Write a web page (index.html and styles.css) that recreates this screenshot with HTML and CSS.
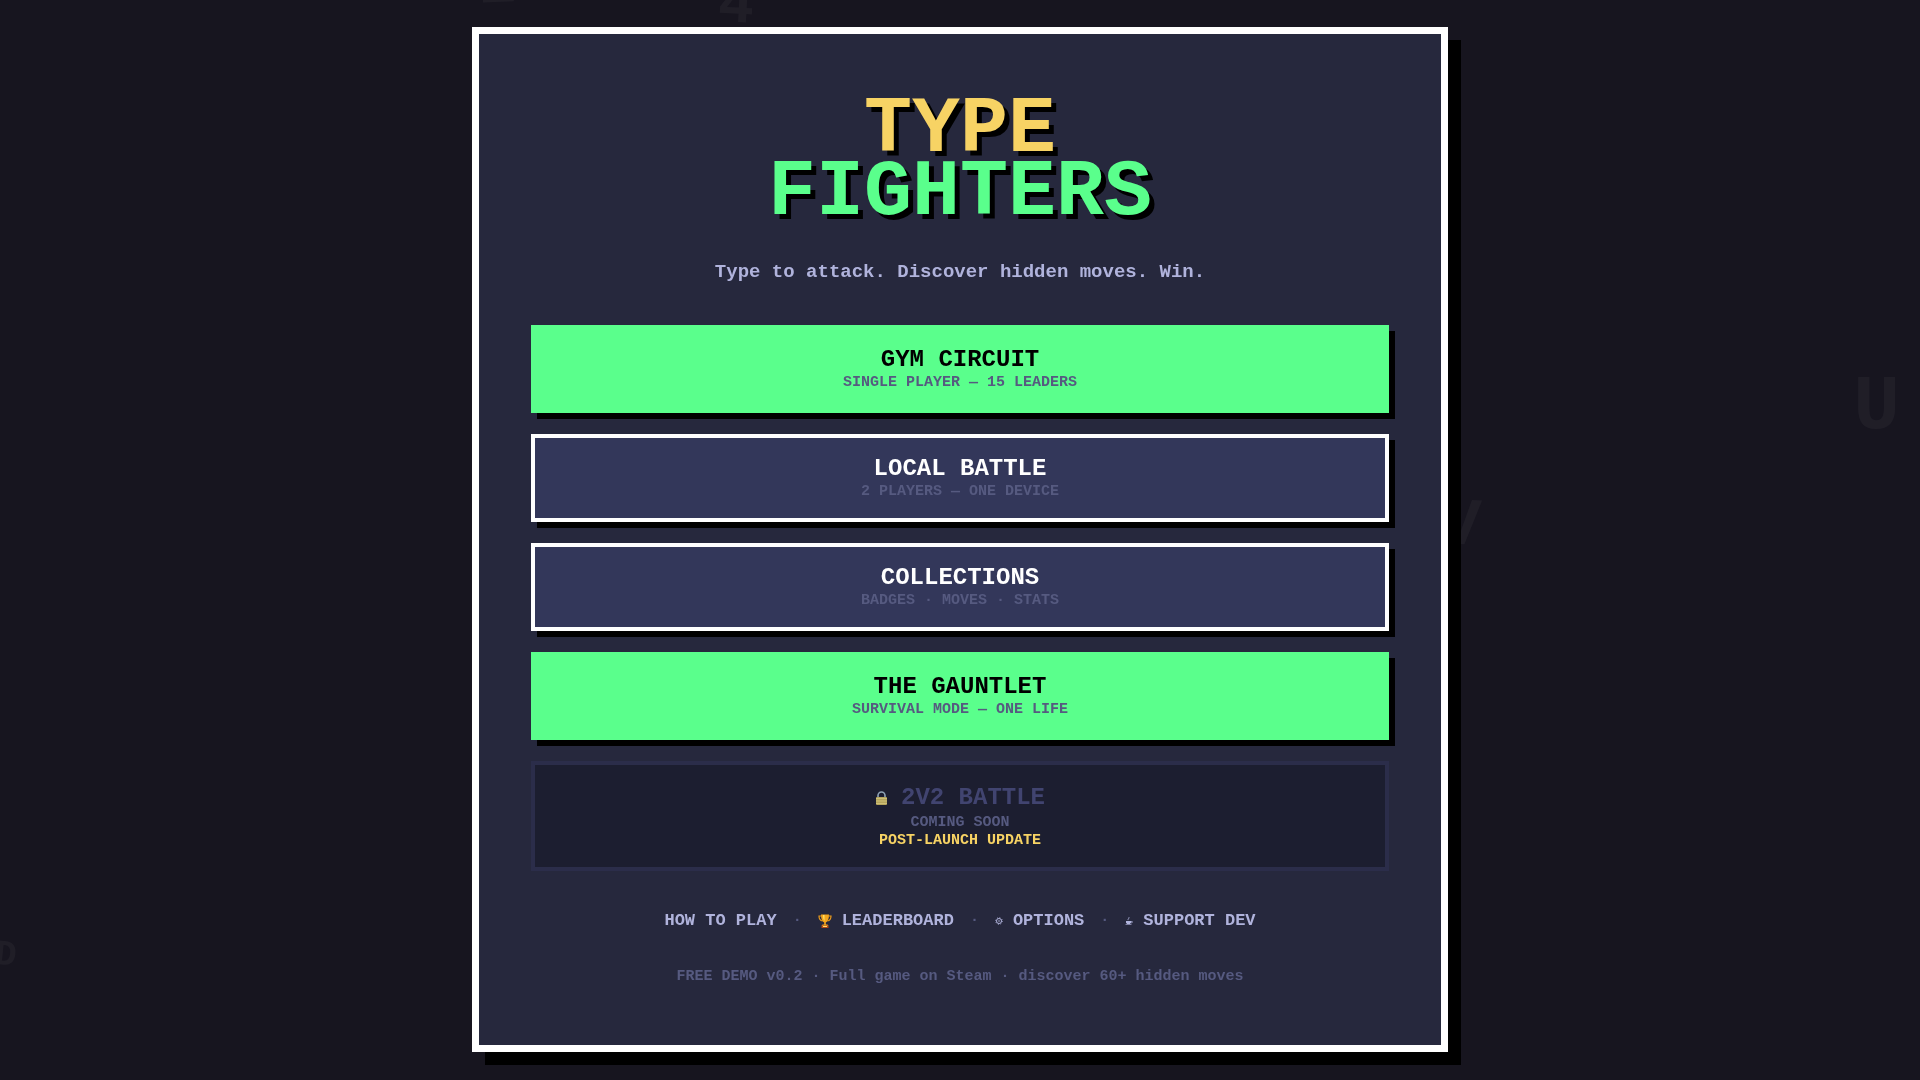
FILE: index.html
```html
<!DOCTYPE html>
<html lang="en">
<head>
  <meta charset="UTF-8">
  <meta name="viewport" content="width=device-width, initial-scale=1.0">
  <title>Type Fighters</title>
  <link rel="stylesheet" href="styles.css">
</head>
<body>
  <div class="bg-letters" aria-hidden="true">
    <span class="letter letter-z">Z</span>
    <span class="letter letter-4">4</span>
    <span class="letter letter-u">U</span>
    <span class="letter letter-v">V</span>
    <span class="letter letter-d">D</span>
  </div>

  <main class="panel">
    <h1 class="title"><span class="title-type">TYPE</span><span class="title-fighters">FIGHTERS</span></h1>
    <p class="tagline">Type to attack. Discover hidden moves. Win.</p>

    <div class="menu">
      <button class="menu-btn primary" type="button">
        <span class="btn-title">GYM CIRCUIT</span>
        <span class="btn-sub">SINGLE PLAYER — 15 LEADERS</span>
      </button>
      <button class="menu-btn" type="button">
        <span class="btn-title">LOCAL BATTLE</span>
        <span class="btn-sub">2 PLAYERS — ONE DEVICE</span>
      </button>
      <button class="menu-btn" type="button">
        <span class="btn-title">COLLECTIONS</span>
        <span class="btn-sub">BADGES · MOVES · STATS</span>
      </button>
      <button class="menu-btn primary" type="button">
        <span class="btn-title">THE GAUNTLET</span>
        <span class="btn-sub">SURVIVAL MODE — ONE LIFE</span>
      </button>
      <button class="menu-btn locked" type="button" disabled>
        <span class="btn-title">
          <svg class="lock" viewBox="0 0 13 14" aria-hidden="true">
            <path d="M3 7V4.500a3.500 3.500 0 0 1 7 0V7" fill="none" stroke="#8fa3b5" stroke-width="1.600"/>
            <rect x="1" y="6" width="11" height="8" rx="1" fill="#b5a45c"/>
            <path d="M1 7.500h11M1 10h11M1 12.500h11" stroke="#d3c67c" stroke-width=".8"/>
          </svg>
          2V2 BATTLE
        </span>
        <span class="btn-sub">COMING SOON</span>
        <span class="btn-note">POST-LAUNCH UPDATE</span>
      </button>
    </div>

    <nav class="links">
      <a href="#how">HOW TO PLAY</a>
      <span class="dot">·</span>
      <a href="#leaderboard">
        <svg class="trophy" viewBox="0 0 14 14" aria-hidden="true">
          <path d="M3.500 2H1c0 3 1 4.500 3.500 5M10.500 2H13c0 3-1 4.500-3.500 5" fill="none" stroke="#e99a1c" stroke-width="1.200"/>
          <path d="M3 .5h8c0 4.500-1 7-3.200 8v2h1.700l1 1.500h-7l1-1.500h1.700v-2C4 7.500 3 5 3 .5z" fill="#f3a61d"/>
          <path d="M5 1h1.500v6C5.500 6 5 4 5 1z" fill="#ffe16b"/>
          <path d="M3.500 11.500h7V14h-7z" fill="#b54a16"/>
          <path d="M5 12h4v1H5z" fill="#ffe16b"/>
        </svg>
        LEADERBOARD
      </a>
      <span class="dot">·</span>
      <a href="#options">
        <svg class="small-icon" viewBox="0 0 8 8" aria-hidden="true">
          <circle cx="4" cy="4" r="2.500" fill="none" stroke="currentColor"/>
          <circle cx="4" cy="4" r=".8" fill="currentColor"/>
          <circle cx="4" cy="4" r="3.300" fill="none" stroke="currentColor" stroke-width="1" stroke-dasharray="1 1.600"/>
        </svg>
        OPTIONS
      </a>
      <span class="dot">·</span>
      <a href="#support">
        <svg class="small-icon" viewBox="0 0 8 8" aria-hidden="true">
          <path d="M1 4h5v1.500L5 7H2L1 5.500z" fill="currentColor"/>
          <path d="M6 4.500h1.300v1L6 6M.5 7.600h6M3 3.200V2l1-.6V0" fill="none" stroke="currentColor" stroke-width=".7"/>
        </svg>
        SUPPORT DEV
      </a>
    </nav>

    <p class="footnote">FREE DEMO v0.2 · Full game on Steam · discover 60+ hidden moves</p>
  </main>
</body>
</html>
```
FILE: styles.css
```css
* { box-sizing: border-box; margin: 0; padding: 0; }

body {
  min-height: 100vh;
  display: flex;
  align-items: center;
  justify-content: center;
  padding-bottom: 2px;
  background: #17151f;
  color: #fff;
  font-family: "Liberation Mono", "Courier New", monospace;
  font-weight: bold;
  overflow: hidden;
}

.bg-letters { position: fixed; inset: 0; overflow: hidden; color: rgba(255, 255, 255, 0.04); }
.letter { position: absolute; line-height: 1; }
.letter-z { left: 25%; top: -44px; font-size: 60px; transform: rotate(-2deg); }
.letter-4 { left: 37%; margin-left: 8px; top: -24px; font-size: 60px; transform: rotate(3deg); }
.letter-u { right: 20px; top: 368px; font-size: 78px; }
.letter-v { left: 75%; top: 492px; font-size: 68px; transform: rotate(3deg); }
.letter-d { left: -5px; top: 938px; font-size: 36px; transform: rotate(6deg); }

.panel {
  position: relative;
  width: 100%;
  max-width: 976px;
  padding: 58px 52px;
  background: #26283d;
  border: 7px solid #fff;
  box-shadow: 13px 13px 0 #000;
  text-align: center;
}

.title { font-size: 80px; line-height: 63px; padding-top: 6px; margin-bottom: 36px; text-shadow: 5px 5px 0 #000; }
.title span { display: block; }
.title-type { color: #f7d364; }
.title-fighters { color: #5aff8c; }

.tagline { font-size: 19px; line-height: 24px; margin-bottom: 41px; color: #b0b3dc; }

.menu { display: flex; flex-direction: column; gap: 21px; margin-bottom: 38px; }
.menu-btn {
  width: 100%;
  padding: 18px 16px 16px;
  border: 4px solid #fff;
  background: #33375a;
  box-shadow: 6px 6px 0 #000;
  color: #fff;
  font: inherit;
  cursor: pointer;
}
.menu-btn span { display: block; }
.menu-btn .btn-title { font-size: 24px; line-height: 26px; }
.btn-sub { font-size: 15px; line-height: 20px; color: #565a80; }
.primary { background: #5aff8c; border-color: #5aff8c; color: #000; }
.locked { background: #1c1e30; border-color: #2b2d4a; box-shadow: none; color: #414470; cursor: default; padding-bottom: 18px; }
.menu-btn.locked .btn-title { display: flex; align-items: center; justify-content: center; gap: 13px; line-height: 30px; }
.lock { width: 13px; height: 14px; }
.btn-note { font-size: 15px; line-height: 16px; color: #f7d364; }

.links { display: flex; align-items: center; justify-content: center; gap: 16px; margin-bottom: 34px; font-size: 17px; line-height: 24px; }
.links a { display: flex; align-items: center; gap: 10px; color: #b0b3dc; text-decoration: none; }
.dot { color: #565a80; font-size: 15px; }
.trophy { width: 14px; height: 14px; }
.small-icon { width: 8px; height: 8px; }

.footnote { font-size: 15px; line-height: 20px; color: #565a80; }
```
